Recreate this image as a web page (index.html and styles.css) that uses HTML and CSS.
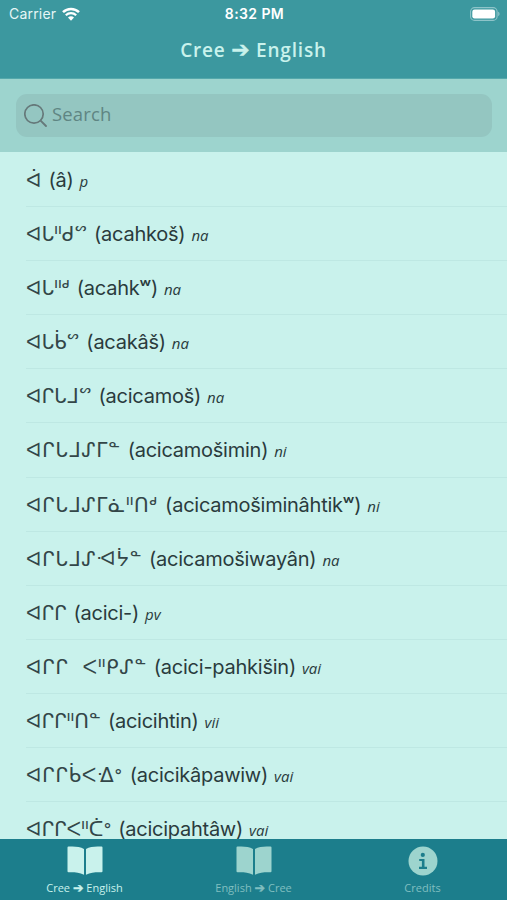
FILE: index.html
```html
<!DOCTYPE html>
<html lang="en">
<head>
    <meta charset="UTF-8">
    <meta name="viewport" content="width=device-width, initial-scale=1.0">
    <title>Cree Dictionary</title>
    <link rel="stylesheet" href="styles.css">
</head>
<body>

<div class="app">
    <header class="header">
        <div class="status">
            <div class="carrier">
                <span>Carrier</span>
                <svg class="wifi" viewBox="0 0 18 14" width="18" height="14">
                    <path d="M1 5.2C5.4 0.800 12.600 0.800 17 5.2" fill="none" stroke="#fff" stroke-width="2.500"/>
                    <path d="M3.800 8.200C6.700 5.400 11.300 5.400 14.200 8.200" fill="none" stroke="#fff" stroke-width="2.200"/>
                    <path d="M6 10.600C7.800 8.900 10.200 8.900 12 10.600L9 13.700Z" fill="#fff"/>
                </svg>
            </div>
            <div class="time">8:32 PM</div>
            <div class="battery">
                <svg viewBox="0 0 30 14" width="30" height="14">
                    <rect x="0.600" y="0.600" width="26.500" height="12.800" rx="4" fill="none" stroke="#8ec4c9" stroke-width="1.100"/>
                    <rect x="2.300" y="2.400" width="22.800" height="9.200" rx="2.300" fill="#fff"/>
                    <path d="M28.200 4.800C30 5.300 30 8.700 28.200 9.200Z" fill="#8ec4c9"/>
                </svg>
            </div>
        </div>
        <h1 class="title">Cree <span class="arrow">➔</span> English</h1>
    </header>

    <div class="search">
        <div class="search-box">
            <svg class="search-icon" viewBox="0 0 24 24" width="24" height="24">
                <circle cx="10" cy="10" r="9.200" fill="none" stroke="#66797a" stroke-width="1.700"/>
                <path d="M16.600 16.600L22 22" stroke="#66797a" stroke-width="1.900" stroke-linecap="round"/>
            </svg>
            <span class="placeholder">Search</span>
        </div>
    </div>

    <main class="list">
        <div class="entry"><span class="cree">ᐋ</span><span class="roman">(â)</span><span class="pos">p</span></div>
        <div class="entry"><span class="cree">ᐊᒐᐦᑯᔥ</span><span class="roman">(acahkoš)</span><span class="pos">na</span></div>
        <div class="entry"><span class="cree">ᐊᒐᐦᒄ</span><span class="roman">(acahkʷ)</span><span class="pos">na</span></div>
        <div class="entry"><span class="cree">ᐊᒐᑳᔥ</span><span class="roman">(acakâš)</span><span class="pos">na</span></div>
        <div class="entry"><span class="cree">ᐊᒋᒐᒧᔥ</span><span class="roman">(acicamoš)</span><span class="pos">na</span></div>
        <div class="entry"><span class="cree loose">ᐊᒋᒐᒧᔑᒥᓐ</span><span class="roman">(acicamošimin)</span><span class="pos">ni</span></div>
        <div class="entry"><span class="cree loose">ᐊᒋᒐᒧᔑᒥᓈᐦᑎᒄ</span><span class="roman">(acicamošiminâhtikʷ)</span><span class="pos">ni</span></div>
        <div class="entry"><span class="cree loose">ᐊᒋᒐᒧᔑᐗᔮᓐ</span><span class="roman">(acicamošiwayân)</span><span class="pos">na</span></div>
        <div class="entry"><span class="cree">ᐊᒋᒋ</span><span class="roman">(acici-)</span><span class="pos">pv</span></div>
        <div class="entry"><span class="cree loose">ᐊᒋᒋ&nbsp; ᐸᐦᑭᔑᓐ</span><span class="roman">(acici-pahkišin)</span><span class="pos">vai</span></div>
        <div class="entry"><span class="cree">ᐊᒋᒋᐦᑎᓐ</span><span class="roman">(acicihtin)</span><span class="pos">vii</span></div>
        <div class="entry"><span class="cree loose">ᐊᒋᒋᑳᐸᐎᐤ</span><span class="roman">(acicikâpawiw)</span><span class="pos">vai</span></div>
        <div class="entry"><span class="cree">ᐊᒋᒋᐸᐦᑖᐤ</span><span class="roman">(acicipahtâw)</span><span class="pos">vai</span></div>
    </main>

    <nav class="tabs">
        <div class="tab active">
            <svg viewBox="0 0 36 30" width="36" height="30">
                <path d="M1.500 0.600C7 0.100 13 0.600 17 2.900V28.800C12 26.400 7 26.100 1.500 26.300Q0.500 26.300 0.500 25.300V1.600Q0.500 0.600 1.500 0.600Z"/>
                <path d="M34.500 0.600C29 0.100 23 0.600 19 2.900V28.800C24 26.400 29 26.100 34.500 26.300Q35.500 26.300 35.500 25.300V1.600Q35.500 0.600 34.500 0.600Z"/>
            </svg>
            <span>Cree <span class="arrow">➔</span> English</span>
        </div>
        <div class="tab">
            <svg viewBox="0 0 36 30" width="36" height="30">
                <path d="M1.500 0.600C7 0.100 13 0.600 17 2.900V28.800C12 26.400 7 26.100 1.500 26.300Q0.500 26.300 0.500 25.300V1.600Q0.500 0.600 1.500 0.600Z"/>
                <path d="M34.500 0.600C29 0.100 23 0.600 19 2.900V28.800C24 26.400 29 26.100 34.500 26.300Q35.500 26.300 35.500 25.300V1.600Q35.500 0.600 34.500 0.600Z"/>
            </svg>
            <span>English <span class="arrow">➔</span> Cree</span>
        </div>
        <div class="tab">
            <svg viewBox="0 0 30 30" width="30" height="30">
                <circle cx="15" cy="15" r="14.500"/>
                <circle class="mark" cx="14.800" cy="8.900" r="2.100"/>
                <path class="mark" d="M11.200 12.900H16.500V20.800H19V22.900H11V20.800H13.900V15.100H11.200Z"/>
            </svg>
            <span>Credits</span>
        </div>
    </nav>
</div>

</body>
</html>
```
FILE: styles.css
```css
body {
    margin: 0;
    font-family: "Open Sans", "Noto Sans", sans-serif;
    background-color: #c9f2ec;
}

.app {
    display: flex;
    flex-direction: column;
    height: 900px;
    overflow: hidden;
}

.header {
    height: 79px;
    flex: none;
    box-sizing: border-box;
    background-color: #3c989f;
    border-bottom: 1px solid #55a8ab;
}

.status {
    display: grid;
    grid-template-columns: 1fr auto 1fr;
    align-items: center;
    height: 27px;
    padding: 0 7px 0 9px;
    font-family: Inter, sans-serif;
    font-size: 14px;
    color: #fff;
}

.carrier {
    display: flex;
    align-items: center;
    gap: 6px;
    letter-spacing: 0.2px;
    color: #e6f6f6;
}

.time {
    font-weight: 600;
    font-size: 14px;
    letter-spacing: 0.4px;
}

.battery {
    display: flex;
    justify-content: flex-end;
}

.title {
    margin: 9px 0 0;
    text-align: center;
    font-size: 19px;
    line-height: 28px;
    font-weight: 600;
    letter-spacing: 0.8px;
    color: #c9f2ec;
}

.arrow {
    font-family: "DejaVu Sans", sans-serif;
    font-weight: bold;
    font-size: 1.15em;
    line-height: 1;
    -webkit-text-stroke: 0.4px;
}

.search {
    height: 73px;
    flex: none;
    box-sizing: border-box;
    padding: 15px 15px 0 16px;
    background-color: #9dd4ce;
}

.search-box {
    display: flex;
    align-items: center;
    height: 43px;
    padding-left: 8px;
    border-radius: 11px;
    background-color: #94c6c1;
}

.placeholder {
    margin: -5px 0 0 4px;
    font-size: 18.5px;
    font-weight: 500;
    letter-spacing: 0.150px;
    color: #5f8583;
}

.list {
    flex: 1;
    min-height: 0;
    overflow: hidden;
    padding: 0.700px 0 0 26px;
    color: #2a3b3d;
}

.entry {
    display: flex;
    align-items: baseline;
    height: 54.150px;
    box-sizing: border-box;
    border-bottom: 1px solid #bee8e3;
    line-height: 54px;
    white-space: pre;
}

.cree {
    font-family: "DejaVu Sans Light", "DejaVu Sans", sans-serif;
    font-size: 20px;
    color: #334648;
}

.loose {
    letter-spacing: 0.650px;
}

.roman {
    margin-left: 7px;
    font-family: Inter, sans-serif;
    font-size: 20px;
    letter-spacing: -0.250px;
}

.pos {
    margin-left: 6px;
    font-size: 15px;
    font-style: italic;
}

.tabs {
    display: flex;
    flex: none;
    height: 61px;
    background-color: #1c7e8c;
}

.tab {
    flex: 1;
    display: flex;
    flex-direction: column;
    align-items: center;
    padding-top: 7px;
    font-size: 11px;
    line-height: 16px;
    color: #80bfc0;
    fill: #9dd4ce;
}

.tab > span {
    margin-top: 4px;
}

.tab.active {
    color: #c9f2ec;
    fill: #c9f2ec;
}

.mark {
    fill: #1c7e8c;
}
```
